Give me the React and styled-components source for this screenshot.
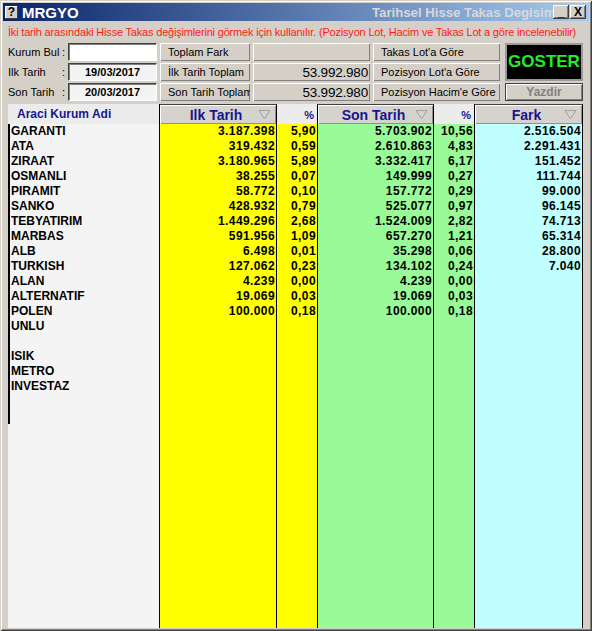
import React from "react";
import styled, { createGlobalStyle } from "styled-components";

const GlobalStyle = createGlobalStyle`
  html, body {
    margin: 0;
    padding: 0;
    background: #d4d0c8;
  }
  body {
    font-family: "Liberation Sans", Arial, sans-serif;
  }
`;

const rows = [
  ["GARANTI", "3.187.398", "5,90", "5.703.902", "10,56", "2.516.504"],
  ["ATA", "319.432", "0,59", "2.610.863", "4,83", "2.291.431"],
  ["ZIRAAT", "3.180.965", "5,89", "3.332.417", "6,17", "151.452"],
  ["OSMANLI", "38.255", "0,07", "149.999", "0,27", "111.744"],
  ["PIRAMIT", "58.772", "0,10", "157.772", "0,29", "99.000"],
  ["SANKO", "428.932", "0,79", "525.077", "0,97", "96.145"],
  ["TEBYATIRIM", "1.449.296", "2,68", "1.524.009", "2,82", "74.713"],
  ["MARBAS", "591.956", "1,09", "657.270", "1,21", "65.314"],
  ["ALB", "6.498", "0,01", "35.298", "0,06", "28.800"],
  ["TURKISH", "127.062", "0,23", "134.102", "0,24", "7.040"],
  ["ALAN", "4.239", "0,00", "4.239", "0,00", ""],
  ["ALTERNATIF", "19.069", "0,03", "19.069", "0,03", ""],
  ["POLEN", "100.000", "0,18", "100.000", "0,18", ""],
  ["UNLU", "", "", "", "", ""],
  ["", "", "", "", "", ""],
  ["ISIK", "", "", "", "", ""],
  ["METRO", "", "", "", "", ""],
  ["INVESTAZ", "", "", "", "", ""],
  ["", "", "", "", "", ""],
  ["", "", "", "", "", ""],
];

const columns = [
  { key: 1, title: "Ilk Tarih", width: 117, bg: "#ffff00", sort: true },
  { key: 2, title: "%", width: 41, bg: "#ffff00" },
  { key: 3, title: "Son Tarih", width: 116, bg: "#98fb98", sort: true },
  { key: 4, title: "%", width: 41, bg: "#98fb98" },
  { key: 5, title: "Fark", width: 109, bg: "#bfffff", sort: true, last: true },
];

function SortArrow() {
  return (
    <svg width="13" height="11" viewBox="0 0 13 11">
      <path d="M1 1.5 L12 1.5 L6.5 10 Z" fill="none" stroke="#a0a0a0" strokeWidth="1" />
    </svg>
  );
}

export default function App() {
  return (
    <>
      <GlobalStyle />
      <Window>
        <TitleBar>
          <HelpIcon>?</HelpIcon>
          <Title>MRGYO</Title>
          <SubTitle>Tarihsel Hisse Takas Degisim</SubTitle>
          <TitleButtons>
            <CaptionButton>_</CaptionButton>
            <CaptionButton>X</CaptionButton>
          </TitleButtons>
        </TitleBar>

        <Info>
          İki tarih arasındaki Hisse Takas değişimlerini görmek için kullanılır. (Pozisyon Lot, Hacim ve Takas Lot a göre incelenebilir)
        </Info>

        <Form>
          <Label><span>Kurum Bul</span><span>:</span></Label>
          <Input />
          <Button>Toplam Fark</Button>
          <Field />
          <Button>Takas Lot'a Göre</Button>
          <Goster>GOSTER</Goster>

          <Label><span>Ilk Tarih</span><span>:</span></Label>
          <Input $date>19/03/2017</Input>
          <Button>İlk Tarih Toplam</Button>
          <Field>53.992.980</Field>
          <Button>Pozisyon Lot'a Göre</Button>

          <Label><span>Son Tarih</span><span>:</span></Label>
          <Input $date>20/03/2017</Input>
          <Button>Son Tarih Toplam</Button>
          <Field>53.992.980</Field>
          <Button>Pozisyon Hacim'e Göre</Button>
          <Yazdir>Yazdir</Yazdir>
        </Form>

        <Grid>
          <NameColumn>
            <NameHeader>Araci Kurum Adi</NameHeader>
            <NameList>
              {rows.map((r, i) => (
                <NameCell key={i}>{r[0]}</NameCell>
              ))}
            </NameList>
          </NameColumn>
          {columns.map((c) => (
            <DataColumn key={c.key} $width={c.width} $bg={c.bg} $last={c.last}>
              <HeadCell $main={c.sort}>
                <HeadText $main={c.sort}>{c.title}</HeadText>
                {c.sort && (
                  <ArrowBox>
                    <SortArrow />
                  </ArrowBox>
                )}
              </HeadCell>
              {rows.map((r, i) => (
                <NumCell key={i}>{r[c.key]}</NumCell>
              ))}
            </DataColumn>
          ))}
        </Grid>
      </Window>
    </>
  );
}

const Window = styled.div`
  box-sizing: border-box;
  width: 592px;
  height: 631px;
  background: #d4d0c8;
  padding: 3px;
  display: flex;
  flex-direction: column;
  box-shadow: inset 1px 1px #d4d0c8, inset -1px -1px #404040,
    inset 2px 2px #ffffff, inset -2px -2px #808080;
  overflow: hidden;
`;

const TitleBar = styled.div`
  height: 18px;
  display: flex;
  align-items: center;
  background: linear-gradient(to right, #0a246a, #a6caf0);
  padding: 0 3px 0 2px;
  flex-shrink: 0;
`;

const HelpIcon = styled.div`
  width: 13px;
  height: 13px;
  background: #d4d0c8;
  color: #000;
  font-weight: bold;
  font-size: 12px;
  line-height: 13px;
  text-align: center;
  box-shadow: inset -1px -1px #404040, inset 1px 1px #fff;
`;

const Title = styled.div`
  color: #fff;
  font-weight: bold;
  font-size: 15px;
  margin-left: 4px;
`;

const SubTitle = styled.div`
  width: 181px;
  margin-left: auto;
  color: #d8d8d8;
  font-weight: bold;
  font-size: 13.2px;
  white-space: nowrap;
  overflow: hidden;
`;

const TitleButtons = styled.div`
  display: flex;
  gap: 1px;
`;

const CaptionButton = styled.div`
  width: 16px;
  height: 14px;
  background: #d4d0c8;
  color: #000;
  font-weight: bold;
  font-size: 12px;
  line-height: 14px;
  text-align: center;
  box-shadow: inset -1px -1px #404040, inset 1px 1px #fff, inset -2px -2px #808080;
`;

const Info = styled.div`
  height: 22px;
  line-height: 22px;
  padding-left: 5px;
  color: #ff1a1a;
  font-size: 11px;
  letter-spacing: -0.19px;
  white-space: nowrap;
  overflow: hidden;
  flex-shrink: 0;
`;

const Form = styled.div`
  display: grid;
  grid-template-columns: 57px 89px 90px 117px 127px 80px;
  grid-template-rows: 18px 18px 18px;
  column-gap: 3px;
  row-gap: 2px;
  padding-left: 5px;
  flex-shrink: 0;
`;

const Label = styled.div`
  display: flex;
  justify-content: space-between;
  align-items: center;
  font-size: 11px;
  color: #000;
  padding-right: 0;
  white-space: nowrap;
`;

const Input = styled.div`
  box-sizing: border-box;
  background: ${(p) => (p.$date ? "#f4f4f4" : "#ffffff")};
  border-top: 1px solid #404040;
  border-left: 1px solid #404040;
  border-right: 1px solid #ffffff;
  border-bottom: 1px solid #ffffff;
  box-shadow: inset 1px 1px #808080;
  font-size: 11px;
  font-weight: bold;
  display: flex;
  align-items: center;
  justify-content: center;
`;

const Button = styled.div`
  box-sizing: border-box;
  background: #d4d0c8;
  box-shadow: inset 1px 1px #ffffff, inset -1px -1px #808080;
  font-size: 11px;
  color: #000;
  display: flex;
  align-items: center;
  padding-left: 8px;
  white-space: nowrap;
  overflow: hidden;
`;

const Field = styled.div`
  box-sizing: border-box;
  background: #d4d0c8;
  box-shadow: inset 1px 1px #ffffff, inset -1px -1px #808080;
  font-size: 13.5px;
  letter-spacing: -0.2px;
  color: #000;
  display: flex;
  align-items: center;
  justify-content: flex-end;
  padding-right: 2px;
`;

const Goster = styled.div`
  grid-row: 1 / span 2;
  grid-column: 6;
  margin-left: 2px;
  box-sizing: border-box;
  background: #000;
  border: 2px solid #9a9a9a;
  color: #22ee22;
  font-weight: bold;
  font-size: 17px;
  display: flex;
  align-items: center;
  justify-content: center;
`;

const Yazdir = styled.div`
  grid-column: 6;
  margin-left: 2px;
  box-sizing: border-box;
  background: #d4d0c8;
  border: 1px solid #404040;
  box-shadow: inset 1px 1px #ffffff, inset -1px -1px #808080;
  color: #808080;
  font-weight: bold;
  font-size: 12px;
  display: flex;
  align-items: center;
  justify-content: center;
`;

const Grid = styled.div`
  flex: 1;
  display: flex;
  margin: 3px 0 0 5px;
  min-height: 0;
`;

const NameColumn = styled.div`
  width: 151px;
  flex-shrink: 0;
  background: #f4f4f4;
  display: flex;
  flex-direction: column;
`;

const NameHeader = styled.div`
  height: 20px;
  line-height: 20px;
  background: #ececec;
  color: #161690;
  font-weight: bold;
  font-size: 12px;
  padding-left: 9px;
`;

const NameList = styled.div`
  border-left: 2px solid #000;
  padding-left: 1px;
`;

const NameCell = styled.div`
  height: 15px;
  line-height: 15px;
  font-weight: bold;
  font-size: 12px;
  color: #000;
  white-space: nowrap;
`;

const DataColumn = styled.div`
  box-sizing: border-box;
  width: ${(p) => p.$width}px;
  flex-shrink: 0;
  background: ${(p) => p.$bg};
  border-left: 1px solid #000;
  border-right: ${(p) => (p.$last ? "1px solid #000" : "none")};
  display: flex;
  flex-direction: column;
`;

const HeadCell = styled.div`
  position: relative;
  height: 20px;
  box-sizing: border-box;
  background: ${(p) => (p.$main ? "#d6d3ce" : "#ececec")};
  border-top: ${(p) => (p.$main ? "1px solid #404040" : "1px solid #ececec")};
  box-shadow: ${(p) => (p.$main ? "inset 1px 1px #ffffff, inset -1px -1px #909090" : "none")};
  display: flex;
  align-items: center;
  justify-content: ${(p) => (p.$main ? "center" : "flex-end")};
  padding-right: ${(p) => (p.$main ? "0" : "3px")};
`;

const HeadText = styled.div`
  color: #161690;
  font-weight: bold;
  font-size: ${(p) => (p.$main ? "14px" : "11px")};
  margin-right: ${(p) => (p.$main ? "4px" : "0")};
`;

const ArrowBox = styled.div`
  position: absolute;
  right: 5px;
  top: 4px;
  display: flex;
`;

const NumCell = styled.div`
  height: 15px;
  line-height: 15px;
  font-weight: bold;
  font-size: 12px;
  letter-spacing: 0.4px;
  color: #000;
  text-align: right;
  padding-right: 1px;
  white-space: nowrap;
`;
